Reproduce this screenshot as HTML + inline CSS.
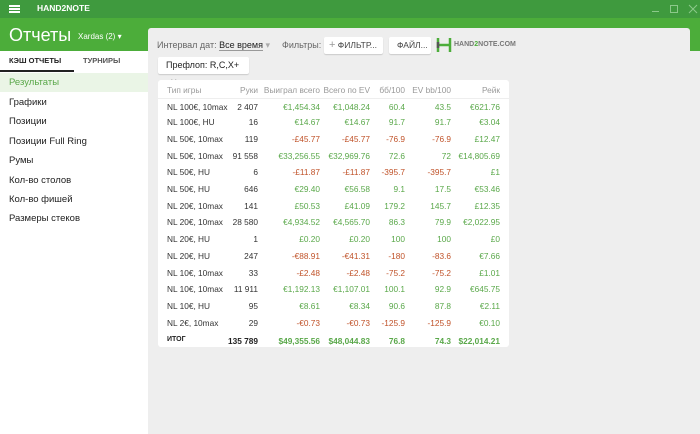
<!DOCTYPE html>
<html><head><meta charset="utf-8"><style>
*{margin:0;padding:0;box-sizing:border-box}
body{width:700px;height:434px;overflow:hidden;background:#eeeeee;font-family:"Liberation Sans","DejaVu Sans",sans-serif;position:relative}
.abs{position:absolute}
#top{left:0;top:0;width:700px;height:18px;background:#3f9a3e}
#hdr{left:0;top:18px;width:700px;height:33px;background:#4cad3a}
#side{left:0;top:51px;width:148px;height:383px;background:#fff}
#panel{left:148px;top:28px;width:542px;height:406px;background:#eeeeee;border-radius:3px 3px 0 0}
.nav{position:absolute;left:9px;font-size:9.5px;color:#222}
#tbl{left:158px;top:80px;width:351px;height:267px;background:#fff;border-radius:3px}
.r{position:absolute;left:0;width:351px;height:16px;font-size:8.3px;color:#333}
.r span{position:absolute;top:3px;white-space:nowrap}
.g{color:#5aa84a}.d{color:#c0532a}
.h{color:#999}
.btn{position:absolute;top:37px;height:17px;background:#fff;border-radius:2px;box-shadow:0 1px 1px rgba(0,0,0,.15);font-size:8.5px;color:#444;line-height:17px;padding:0 8px}
</style></head><body>
<div id="top" class="abs"></div>
<div class="abs" style="left:9px;top:5px;width:11px;height:2px;background:#fff;box-shadow:0 3px 0 #fff,0 6px 0 #fff"></div>
<div class="abs" style="left:37px;top:3px;color:#fff;font-size:8.5px;font-weight:bold">HAND2NOTE</div>
<div class="abs" style="left:652px;top:11px;width:7px;height:1px;background:#8cc98a"></div>
<div class="abs" style="left:670px;top:5px;width:8px;height:8px;border:1px solid #8cc98a"></div>
<svg class="abs" style="left:688px;top:4px" width="10" height="10"><path d="M1 1L9 9M9 1L1 9" stroke="#8cc98a" stroke-width="1"/></svg>
<div id="hdr" class="abs"></div>
<div class="abs" style="left:9px;top:25px;color:#fff;font-size:18px">Отчеты</div>
<div class="abs" style="left:78px;top:32px;color:#fff;font-size:8px">Xardas (2) ▾</div>
<div id="side" class="abs"></div>
<div class="abs" style="left:9px;top:56px;font-size:7.5px;font-weight:bold;color:#222">КЭШ ОТЧЕТЫ</div>
<div class="abs" style="left:83px;top:56px;font-size:7.5px;font-weight:bold;color:#555">ТУРНИРЫ</div>
<div class="abs" style="left:0;top:70px;width:74px;height:2px;background:#222"></div>
<div class="abs" style="left:0;top:73px;width:148px;height:19px;background:#eaf5e6"></div>
<div class="nav" style="top:77px;color:#5aa84a">Результаты</div>
<div class="nav" style="top:97px">Графики</div>
<div class="nav" style="top:116px">Позиции</div>
<div class="nav" style="top:136px">Позиции Full Ring</div>
<div class="nav" style="top:155px">Румы</div>
<div class="nav" style="top:175px">Кол-во столов</div>
<div class="nav" style="top:194px">Кол-во фишей</div>
<div class="nav" style="top:213px">Размеры стеков</div>
<div id="panel" class="abs"></div>
<div class="abs" style="left:157px;top:40px;font-size:9px;color:#666">Интервал дат: <span style="color:#222;border-bottom:1px solid #999">Все время</span> <span style="color:#aaa">▾</span></div>
<div class="abs" style="left:282px;top:40px;font-size:9px;color:#666">Фильтры:</div>
<div class="btn" style="left:324px;width:59px;padding:0 5px"><span style="color:#999;font-size:11px">+</span> ФИЛЬТР...</div>
<div class="btn" style="left:389px;width:42px">ФАЙЛ...</div>
<svg class="abs" style="left:436px;top:37px" width="16" height="16"><path d="M2 1v14M14 1v14M2 8h12" stroke="#4cad3a" stroke-width="2.5" fill="none"/><path d="M2 5v6" stroke="#555" stroke-width="2.5"/></svg>
<div class="abs" style="left:454px;top:41px;font-size:7px;font-weight:bold;color:#777">HAND<span style="color:#4cad3a">2</span>NOTE.COM</div>
<div class="btn" style="left:158px;top:57px;width:91px;font-size:9px;color:#222">Префлоп: R,C,X+ <span style="color:#aaa;margin-left:4px">✕</span></div>
<div id="tbl" class="abs"></div>
<div id="rows"></div>
<script>
var d=[["Тип игры","Руки","Выиграл всего","Всего по EV","бб/100","EV bb/100","Рейк"],
["NL 100€, 10max","2 407","€1,454.34","€1,048.24","60.4","43.5","€621.76"],
["NL 100€, HU","16","€14.67","€14.67","91.7","91.7","€3.04"],
["NL 50€, 10max","119","-£45.77","-£45.77","-76.9","-76.9","£12.47"],
["NL 50€, 10max","91 558","€33,256.55","€32,969.76","72.6","72","€14,805.69"],
["NL 50€, HU","6","-£11.87","-£11.87","-395.7","-395.7","£1"],
["NL 50€, HU","646","€29.40","€56.58","9.1","17.5","€53.46"],
["NL 20€, 10max","141","£50.53","£41.09","179.2","145.7","£12.35"],
["NL 20€, 10max","28 580","€4,934.52","€4,565.70","86.3","79.9","€2,022.95"],
["NL 20€, HU","1","£0.20","£0.20","100","100","£0"],
["NL 20€, HU","247","-€88.91","-€41.31","-180","-83.6","€7.66"],
["NL 10€, 10max","33","-£2.48","-£2.48","-75.2","-75.2","£1.01"],
["NL 10€, 10max","11 911","€1,192.13","€1,107.01","100.1","92.9","€645.75"],
["NL 10€, HU","95","€8.61","€8.34","90.6","87.8","€2.11"],
["NL 2€, 10max","29","-€0.73","-€0.73","-125.9","-125.9","€0.10"],
["ИТОГ","135 789","$49,355.56","$48,044.83","76.8","74.3","$22,014.21"]];
var rx=[0,258,320,370,405,451,500],h="";
d.forEach(function(r,i){
 var top=i==0?82:(i==15?333:97.5+16.7*(i-1));
 h+='<div class="r" style="left:158px;top:'+top+'px'+(i==1?';border-top:1px solid #eee':'')+'">';
 r.forEach(function(c,j){
  var cls=i==0?"h":(j<2?"":(c[0]=="-"?"d":"g"));
  var st=j==0?'left:9px':'right:'+(509-rx[j])+'px';
  if(i==15)st+=';font-weight:bold';
  h+='<span class="'+cls+'" style="'+st+(i==15&&j<2?';color:#222':'')+(i==15&&j==0?';font-size:7px':'')+'">'+c+'</span>';
 });
 h+='</div>';
});
document.getElementById("rows").innerHTML=h;
</script>
</body></html>
